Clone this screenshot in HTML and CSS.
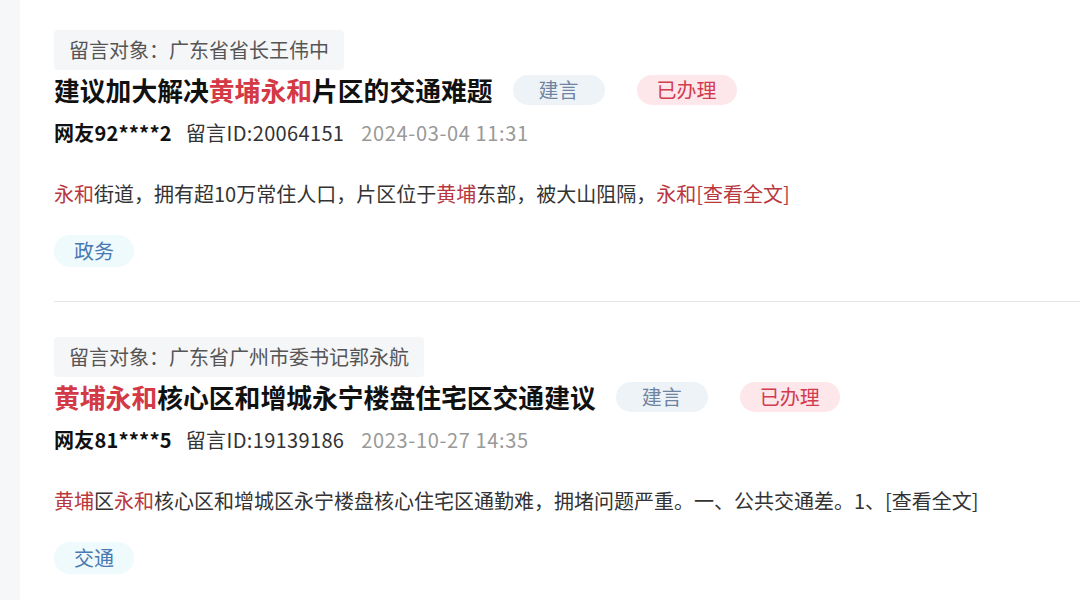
FILE: index.html
```html
<!DOCTYPE html>
<html lang="zh-CN">
<head>
    <meta charset="UTF-8">
    <meta name="viewport" content="width=device-width, initial-scale=1.0">
    <link rel="stylesheet" href="styles.css">
    <title>留言列表</title>
</head>
<body>
    <div class="page">
        <div class="side"></div>
        <div class="list">
            <div class="item">
                <div class="target">留言对象：广东省省长王伟中</div>
                <div class="title-row">
                    <h2 class="title">建议加大解决<span class="hl">黄埔永和</span>片区的交通难题</h2>
                    <span class="pill pill-type">建言</span>
                    <span class="pill pill-done">已办理</span>
                </div>
                <div class="meta">
                    <span class="user">网友92****2</span>
                    <span class="msg-id">留言ID:20064151</span>
                    <span class="date">2024-03-04 11:31</span>
                </div>
                <p class="summary"><span class="kw">永和</span>街道，拥有超10万常住人口，片区位于<span class="kw">黄埔</span>东部，被大山阻隔，<span class="kw">永和[查看全文]</span></p>
                <span class="tag">政务</span>
            </div>
            <div class="item">
                <div class="target">留言对象：广东省广州市委书记郭永航</div>
                <div class="title-row">
                    <h2 class="title"><span class="hl">黄埔永和</span>核心区和增城永宁楼盘住宅区交通建议</h2>
                    <span class="pill pill-type">建言</span>
                    <span class="pill pill-done">已办理</span>
                </div>
                <div class="meta">
                    <span class="user">网友81****5</span>
                    <span class="msg-id">留言ID:19139186</span>
                    <span class="date">2023-10-27 14:35</span>
                </div>
                <p class="summary"><span class="kw">黄埔</span>区<span class="kw">永和</span>核心区和增城区永宁楼盘核心住宅区通勤难，拥堵问题严重。一、公共交通差。1、[查看全文]</p>
                <span class="tag">交通</span>
            </div>
        </div>
    </div>
</body>
</html>
```

FILE: styles.css
```css
body {
    margin: 0;
    padding: 0;
    background: #fff;
    font-family: "Noto Sans CJK SC", "Noto Sans", sans-serif;
    color: #333;
}

.page {
    display: flex;
    height: 600px;
    overflow: hidden;
}

.side {
    width: 20px;
    flex-shrink: 0;
    background-color: #f6f7f9;
}

.list {
    flex: 1;
    margin-left: 34px;
}

.item {
    padding: 30px 0 34px;
    border-bottom: 1px solid #e6e6e6;
    display: flex;
    flex-direction: column;
    align-items: flex-start;
}

.item + .item {
    padding-top: 35px;
}

.target {
    height: 40px;
    line-height: 40px;
    padding: 0 15px;
    background-color: #f5f6f8;
    border-radius: 4px;
    font-size: 20px;
    color: #555;
}

.title-row {
    display: flex;
    align-items: center;
    margin-top: 2px;
    height: 36px;
}

.title {
    margin: 0 20px 0 0;
    font-size: 25.8px;
    line-height: 36px;
    font-weight: 700;
    color: #111;
}

.hl {
    color: #d33a45;
}

.pill {
    box-sizing: border-box;
    min-width: 92px;
    height: 30px;
    line-height: 30px;
    padding: 0 20px;
    border-radius: 15px;
    font-size: 20px;
    text-align: center;
}

.pill + .pill {
    margin-left: 32px;
}

.pill-type {
    background-color: #eef3f8;
    color: #6f84a0;
}

.pill-done {
    background-color: #fde7eb;
    color: #d23c4e;
}

.meta {
    display: flex;
    gap: 14px;
    margin-top: 10px;
    font-size: 20px;
    line-height: 30px;
}

.user {
    font-weight: 700;
    color: #111;
    letter-spacing: 0.2px;
}

.msg-id {
    color: #333;
    letter-spacing: 0.35px;
}

.date {
    color: #999;
    margin-left: 3px;
    letter-spacing: 0.65px;
}

.summary {
    margin: 31px 0 0;
    font-size: 20px;
    line-height: 30px;
    color: #333;
}

.kw {
    color: #b9383f;
}

.tag {
    margin-top: 26px;
    height: 32px;
    line-height: 32px;
    padding: 0 20px;
    border-radius: 16px;
    background-color: #eefafc;
    color: #4a78b3;
    font-size: 20px;
}
```
